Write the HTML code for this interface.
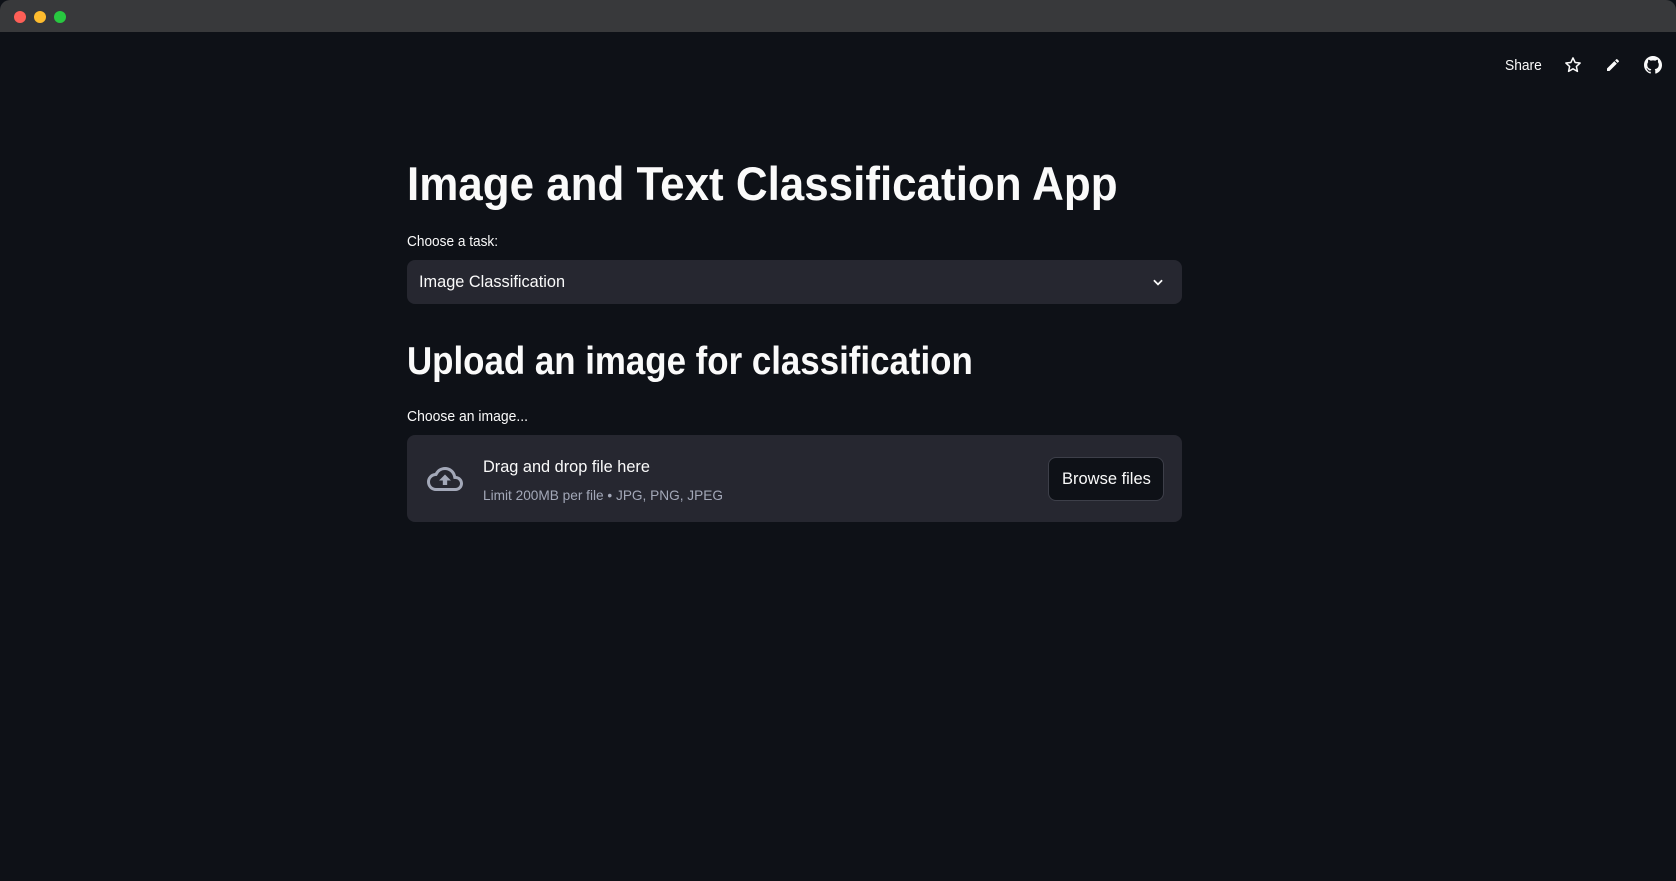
<!DOCTYPE html>
<html><head><meta charset="utf-8"><style>
html,body{margin:0;padding:0;width:1676px;height:881px;overflow:hidden;background:#0e1117;font-family:"Liberation Sans",sans-serif;color:#fafafa}
.tb{position:absolute;left:0;top:0;width:1676px;height:32px;background:#38393b;border-radius:10px 10px 0 0}
.dot{position:absolute;top:11px;width:12px;height:12px;border-radius:50%}
.s{display:inline-block;transform-origin:left center;white-space:nowrap;position:absolute}
.box{position:absolute;background:#262730;border-radius:8px}
</style></head><body>
<div class="tb">
<div class="dot" style="left:14px;background:#fe5f57"></div>
<div class="dot" style="left:34px;background:#febc2e"></div>
<div class="dot" style="left:54px;background:#28c840"></div>
</div>
<span class="s" style="left:1505px;top:57px;font-size:15px;transform:scaleX(.92)">Share</span>
<svg style="position:absolute;left:1564px;top:56px" width="18" height="18" viewBox="0 0 24 24" fill="none" stroke="#fafafa" stroke-width="2" stroke-linejoin="round"><path d="M12 2.5l2.9 6.2 6.6.7-5 4.5 1.4 6.6L12 17.1l-5.9 3.4 1.4-6.6-5-4.5 6.6-.7z"/></svg>
<svg style="position:absolute;left:1605px;top:57px" width="16" height="16" viewBox="0 0 24 24" fill="#fafafa"><path d="M3 17.25V21h3.75L17.8 9.94l-3.75-3.75L3 17.25zM20.7 7.04a1 1 0 000-1.41l-2.34-2.34a1 1 0 00-1.41 0l-1.83 1.83 3.75 3.75 1.83-1.83z"/></svg>
<svg style="position:absolute;left:1644px;top:56px" width="18" height="18" viewBox="0 0 16 16" fill="#fafafa"><path d="M8 0C3.580 0 0 3.58 0 8c0 3.54 2.29 6.53 5.47 7.59.4.07.55-.17.55-.38v-1.33c-2.23.48-2.7-1.07-2.7-1.07-.36-.92-.89-1.170-.89-1.17-.73-.5.06-.49.06-.49.8.06 1.23.83 1.23.83.71 1.22 1.87.87 2.33.66.07-.52.28-.87.51-1.07-1.78-.2-3.64-.89-3.64-3.95 0-.87.31-1.59.82-2.150-.08-.2-.36-1.02.08-2.12 0 0 .67-.21 2.2.82a7.6 7.6 0 014 0c1.53-1.04 2.2-.82 2.2-.82.44 1.1.16 1.92.08 2.12.51.56.82 1.27.82 2.15 0 3.07-1.87 3.75-3.65 3.95.29.25.54.73.54 1.48v2.2c0 .21.15.46.55.38A8 8 0 0016 8c0-4.42-3.58-8-8-8z"/></svg>

<span class="s" style="left:407px;top:156px;font-size:47px;font-weight:bold;transform:scaleX(.935)">Image and Text Classification App</span>
<span class="s" style="left:407px;top:233px;font-size:15px;transform:scaleX(.91)">Choose a task:</span>
<div class="box" style="left:407px;top:260px;width:775px;height:44px"></div>
<span class="s" style="left:419px;top:272px;font-size:17px;transform:scaleX(.96)">Image Classification</span>
<svg style="position:absolute;left:1151px;top:275px" width="14" height="14" viewBox="0 0 24 24" fill="none" stroke="#fafafa" stroke-width="3"><path d="M5 9l7 7 7-7"/></svg>

<span class="s" style="left:407px;top:340px;font-size:39px;font-weight:bold;transform:scaleX(.894)">Upload an image for classification</span>
<span class="s" style="left:407px;top:408px;font-size:15px;transform:scaleX(.93)">Choose an image...</span>
<div class="box" style="left:407px;top:435px;width:775px;height:87px"></div>
<svg style="position:absolute;left:424px;top:461px" width="42" height="36" viewBox="0 0 24 24" fill="#a3a8b8"><path d="M19.35 10.04A7.490 7.49 0 0012 4C9.11 4 6.6 5.64 5.35 8.04A5.99 5.99 0 000 14c0 3.31 2.69 6 6 6h13c2.76 0 5-2.24 5-5 0-2.64-2.05-4.78-4.65-4.96zM19 18H6c-2.21 0-4-1.79-4-4 0-2.05 1.53-3.76 3.56-3.97l1.07-.11.5-.95A5.47 5.47 0 0112 6c2.62 0 4.88 1.86 5.39 4.43l.3 1.5 1.53.11A2.98 2.98 0 0122 15c0 1.65-1.35 3-3 3zM8 13h2.55v3h2.9v-3H16l-4-4z"/></svg>
<span class="s" style="left:483px;top:457px;font-size:17px;transform:scaleX(.96)">Drag and drop file here</span>
<span class="s" style="left:483px;top:487px;font-size:14px;color:#a3a8b8;transform:scaleX(.975)">Limit 200MB per file • JPG, PNG, JPEG</span>
<div style="position:absolute;left:1048px;top:457px;width:114px;height:42px;background:#0e1117;border:1px solid #3d3f49;border-radius:8px"></div>
<span class="s" style="left:1062px;top:469px;font-size:17px;transform:scaleX(.97)">Browse files</span>
</body></html>
